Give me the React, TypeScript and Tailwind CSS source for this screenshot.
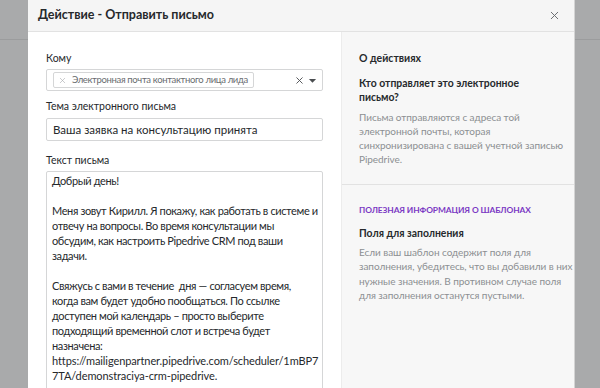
import { X } from "lucide-react";

const font = { fontFamily: "Lato, 'Noto Sans', sans-serif" };

// [text, isLatinOnly]
const bodyLines: [string, boolean][] = [
  ["Добрый день!", false],
  ["", false],
  ["Меня зовут Кирилл. Я покажу, как работать в системе и", false],
  ["отвечу на вопросы. Во время консультации мы", false],
  ["обсудим, как настроить Pipedrive CRM под ваши", false],
  ["задачи.", false],
  ["", false],
  ["Свяжусь с вами в течение\u00a0 дня — согласуем время,", false],
  ["когда вам будет удобно пообщаться. По ссылке", false],
  ["доступен мой календарь – просто выберите", false],
  ["подходящий временной слот и встреча будет", false],
  ["назначена:", false],
  ["https://mailigenpartner.pipedrive.com/scheduler/1mBP7", true],
  ["7TA/demonstraciya-crm-pipedrive.", true],
];

export default function App() {
  return (
    <div
      className="relative w-[600px] h-[388px] overflow-hidden bg-[#a9aaab]"
      style={font}
    >
      {/* page behind the overlay */}
      <div className="h-[40px] border-b border-[#9b9c9d]" />

      {/* modal */}
      <div className="absolute left-[28px] top-0 w-[546px] h-[400px] bg-white flex flex-col shadow-[1px_0_0_#d4d4d4]">
        <div className="h-[32px] shrink-0 bg-[#f5f5f5] border-b border-[#e2e2e2] flex items-center justify-between pl-[10px] pr-[13px]">
          <h1 className="text-[12.5px] font-bold text-[#26292c]">
            Действие - Отправить письмо
          </h1>
          <X className="w-[13px] h-[13px] text-[#6a6d70]" strokeWidth={1.8} />
        </div>

        <div className="flex flex-1">
          {/* form */}
          <div className="w-[313px] shrink-0 px-[18px] pt-[19px] text-[#26292c]">
            <label className="block text-[10.5px] leading-[14px] mb-[4px]">Кому</label>
            <div className="h-[22px] border border-[#d5d6d7] rounded-[2px] flex items-center pl-[6px] pr-[5px]">
              <div className="h-[16px] border border-[#d5d6d7] rounded-[2px] flex items-center gap-[5px] pl-[4px] pr-[5px] text-[9.5px] tracking-[-0.35px] text-[#6a6d70] whitespace-nowrap">
                <X className="w-[9px] h-[9px] shrink-0 text-[#a8aaac]" strokeWidth={1.6} />
                <span>Электронная почта контактного лица лида</span>
              </div>
              <div className="ml-auto flex items-center gap-[3px] text-[#4a4d50]">
                <X className="w-[11px] h-[11px]" strokeWidth={2} />
                <svg width="9" height="9" viewBox="0 0 10 10">
                  <path d="M1 3.2h8L5 7.4z" fill="currentColor" />
                </svg>
              </div>
            </div>

            <label className="block text-[10.5px] leading-[14px] mt-[8px] mb-[5px]">
              Тема электронного письма
            </label>
            <div className="h-[23px] border border-[#d5d6d7] rounded-[2px] flex items-center px-[6px] text-[11.5px] whitespace-nowrap">
              Ваша заявка на консультацию принята
            </div>

            <label className="block text-[10.5px] leading-[14px] mt-[12px] mb-[4px]">
              Текст письма
            </label>
            <div className="border border-[#d5d6d7] rounded-[2px] pl-[5px] pt-[1px] h-[260px] text-[11px] leading-[15px] whitespace-nowrap">
              {bodyLines.map(([line, latin], i) => (
                <p key={i} className={latin ? "tracking-[-0.1px]" : "tracking-[-0.37px]"}>
                  {line || "\u00a0"}
                </p>
              ))}
            </div>
          </div>

          {/* help panel */}
          <div className="flex-1 min-w-0 bg-[#f7f7f7] border-l border-[#ececec] whitespace-nowrap">
            <div className="pl-[17px] pt-[19px] pb-[18px] border-b border-[#e2e2e2]">
              <h2 className="text-[10.5px] font-bold text-[#26292c] leading-[14px]">О действиях</h2>
              <h3 className="mt-[11px] text-[10.4px] font-bold text-[#26292c] leading-[14px]">
                Кто отправляет это электронное
                <br />
                письмо?
              </h3>
              <p className="mt-[6px] text-[10px] tracking-[-0.05px] leading-[14px] text-[#8c8f92]">
                Письма отправляются с адреса той
                <br />
                электронной почты, которая
                <br />
                синхронизирована с вашей учетной записью
                <br />
                Pipedrive.
              </p>
            </div>
            <div className="pl-[17px] pt-[18px]">
              <h2 className="text-[8.4px] font-bold tracking-[-0.1px] text-[#7b39c4] leading-[14px]">
                ПОЛЕЗНАЯ ИНФОРМАЦИЯ О ШАБЛОНАХ
              </h2>
              <h3 className="mt-[9px] text-[10.4px] font-bold text-[#26292c] leading-[14px]">
                Поля для заполнения
              </h3>
              <p className="mt-[5px] text-[10px] tracking-[-0.05px] leading-[14.4px] text-[#8c8f92]">
                Если ваш шаблон содержит поля для
                <br />
                заполнения, убедитесь, что вы добавили в них
                <br />
                нужные значения. В противном случае поля
                <br />
                для заполнения останутся пустыми.
              </p>
            </div>
          </div>
        </div>
      </div>
    </div>
  );
}
